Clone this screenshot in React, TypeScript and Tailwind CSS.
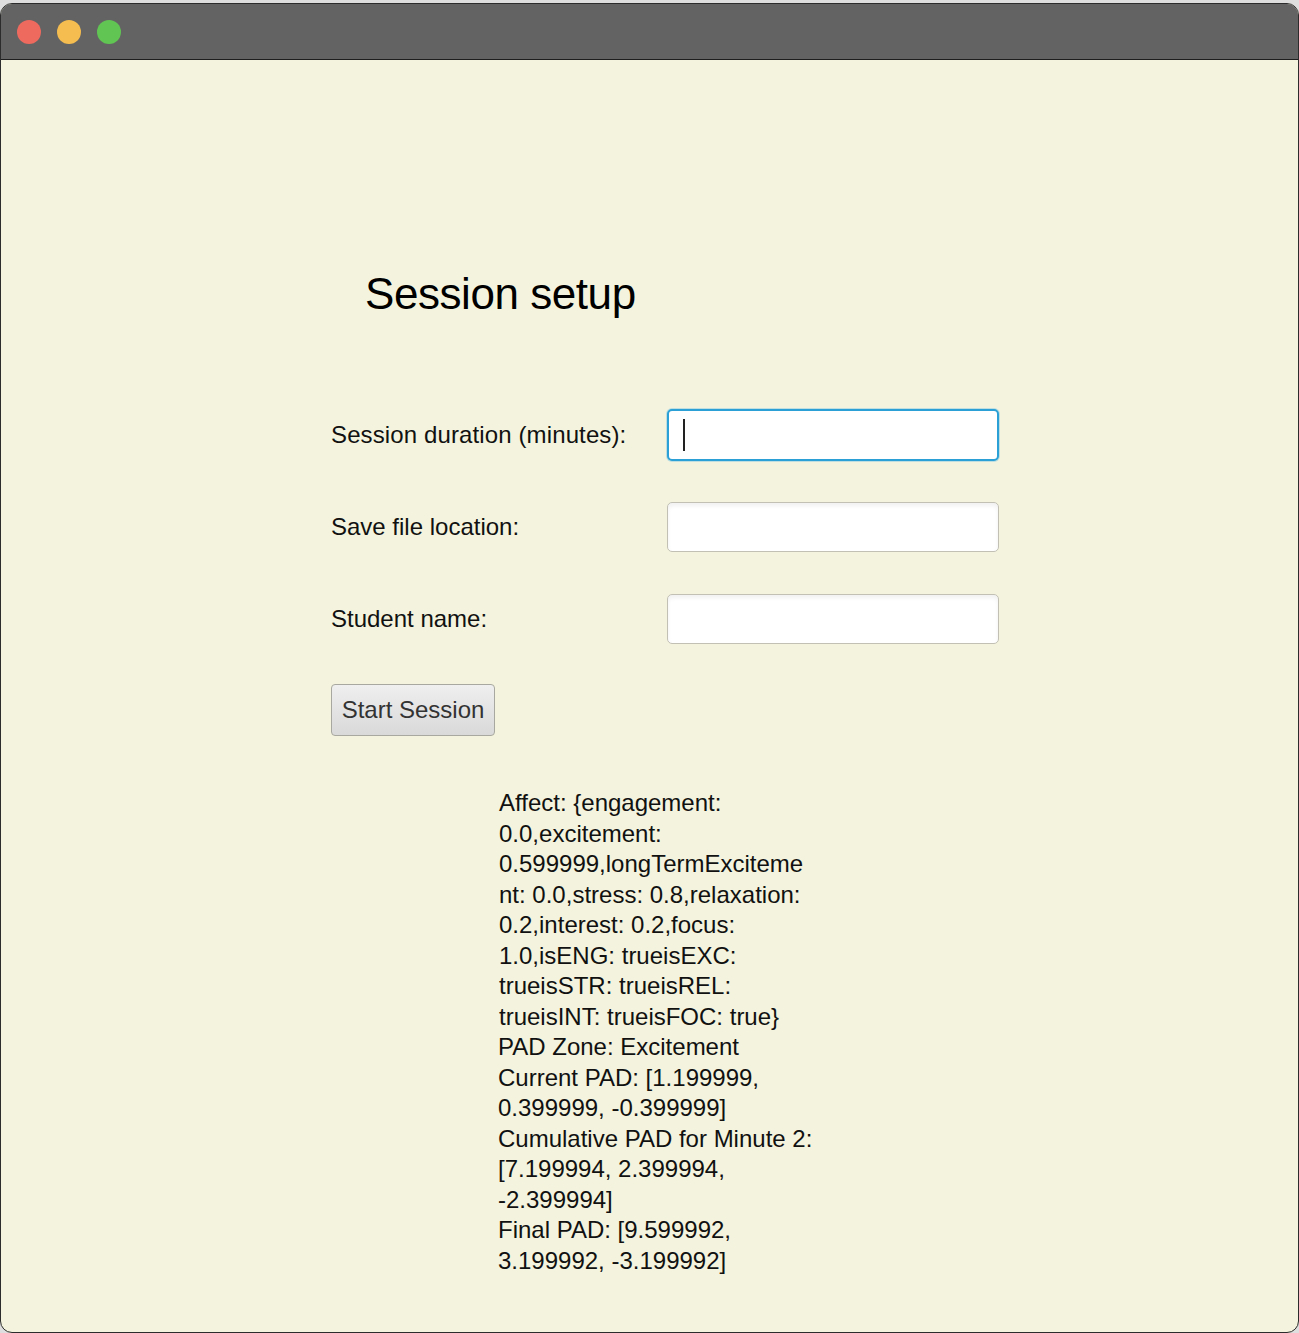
export default function App() {
  const font = { fontFamily: '"Liberation Sans", Arial, sans-serif' };

  const lines = [
    "Affect: {engagement:",
    "0.0,excitement:",
    "0.599999,longTermExciteme",
    "nt: 0.0,stress: 0.8,relaxation:",
    "0.2,interest: 0.2,focus:",
    "1.0,isENG: trueisEXC:",
    "trueisSTR: trueisREL:",
    "trueisINT: trueisFOC: true}",
    "PAD Zone: Excitement",
    "Current PAD: [1.199999,",
    "0.399999, -0.399999]",
    "Cumulative PAD for Minute 2:",
    "[7.199994, 2.399994,",
    "-2.399994]",
    "Final PAD: [9.599992,",
    "3.199992, -3.199992]",
  ];

  return (
    <div className="w-[1299px] h-[1333px] bg-[#dedede] pt-[3px] overflow-hidden" style={font}>
      <div className="h-[1330px] flex flex-col rounded-[12px] border border-[#2c2c2c] overflow-hidden bg-[#f4f4de]">
        {/* title bar */}
        <div className="h-[56px] shrink-0 bg-[#636363] border-b border-[#1e1e1e] flex items-center pl-[16px] gap-[16px]">
          <div className="w-[24px] h-[24px] rounded-full bg-[#ee6a5f]" />
          <div className="w-[24px] h-[24px] rounded-full bg-[#f5bd4f]" />
          <div className="w-[24px] h-[24px] rounded-full bg-[#61c554]" />
        </div>

        <div className="flex flex-col pl-[330px] pt-[212px] text-[#111]">
          <h1 className="ml-[34px] text-[44px] leading-[44px] font-normal text-black tracking-[-0.01em]">
            Session setup
          </h1>

          <div className="mt-[94px] flex flex-col gap-[42px]">
            <div className="flex items-center h-[50px]">
              <span className="w-[336px] text-[24px] tracking-[0.005em]">Session duration (minutes):</span>
              <div className="w-[332px] h-[52px] -my-[1px] rounded-[5px] border-2 border-[#2aa0d6] bg-white flex items-center pl-[14px] shadow-[0_0_0_1px_rgba(90,180,230,0.35)]">
                <div className="w-[2px] h-[32px] bg-[#222]" />
              </div>
            </div>
            <div className="flex items-center h-[50px]">
              <span className="w-[336px] text-[24px]">Save file location:</span>
              <div className="w-[332px] h-[50px] rounded-[5px] border-[1.5px] border-[#c2c0b4] bg-white shadow-[inset_0_3px_4px_rgba(0,0,0,0.06)]" />
            </div>
            <div className="flex items-center h-[50px]">
              <span className="w-[336px] text-[24px]">Student name:</span>
              <div className="w-[332px] h-[50px] rounded-[5px] border-[1.5px] border-[#c2c0b4] bg-white shadow-[inset_0_3px_4px_rgba(0,0,0,0.06)]" />
            </div>
          </div>

          <button className="mt-[40px] self-start w-[164px] h-[52px] rounded-[4px] border-[1.5px] border-[#a9a8a0] bg-gradient-to-b from-[#efefef] to-[#d9d9d9] text-[24px] text-[#333] flex items-center justify-center">
            Start Session
          </button>

          <div className="mt-[52px] ml-[168px] flex flex-col text-[24px] leading-[30.5px] text-[#111]">
            {lines.map((l, i) => (
              <div key={i} className={i >= 8 ? "-ml-[1px]" : ""}>{l}</div>
            ))}
          </div>
        </div>
      </div>
    </div>
  );
}
